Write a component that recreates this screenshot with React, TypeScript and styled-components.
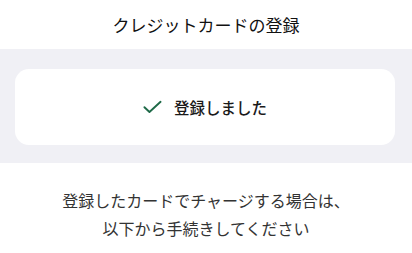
import styled, { createGlobalStyle } from 'styled-components'

const GlobalStyle = createGlobalStyle`
    body {
        margin: 0;
        background: #ffffff;
        font-family: "Noto Sans CJK JP", "Noto Sans", sans-serif;
        color: #1a1a1a;
    }
`

const App = () => {
    return (
        <>
            <GlobalStyle />
            <Pagina>
                <Cabecalho>
                    <Titulo>クレジットカードの登録</Titulo>
                </Cabecalho>
                <Faixa>
                    <Cartao>
                        <Check viewBox="0 0 20 14" aria-hidden="true">
                            <path d="M1.5 7.2 L6.8 12.2 L18.5 1.5" />
                        </Check>
                        <Mensagem>登録しました</Mensagem>
                    </Cartao>
                </Faixa>
                <Aviso>
                    登録したカードでチャージする場合は、
                    <br />
                    以下から手続きしてください
                </Aviso>
            </Pagina>
        </>
    )
}

export default App

const Pagina = styled.div`
    display: flex;
    flex-direction: column;
    width: 412px;
`

const Cabecalho = styled.header`
    height: 49px;
    display: flex;
    align-items: center;
    justify-content: center;
`

const Titulo = styled.h1`
    margin: 0;
    font-size: 17px;
    font-weight: 400;
    color: #111;
    line-height: 1;
`

const Faixa = styled.section`
    background: #f0f0f5;
    padding: 20px 17px 18px 15px;
`

const Cartao = styled.div`
    background: #ffffff;
    border-radius: 14px;
    height: 76px;
    display: flex;
    align-items: center;
    justify-content: center;
    gap: 12px;
`

const Check = styled.svg`
    width: 19px;
    height: 14px;
    fill: none;
    stroke: #1f6a48;
    stroke-width: 2;
    stroke-linecap: round;
    stroke-linejoin: round;
`

const Mensagem = styled.span`
    font-size: 15.5px;
    font-weight: 500;
    color: #1a1a1a;
`

const Aviso = styled.p`
    margin: 24px 0 0;
    text-align: center;
    font-size: 16px;
    line-height: 27.5px;
    color: #333;
`
